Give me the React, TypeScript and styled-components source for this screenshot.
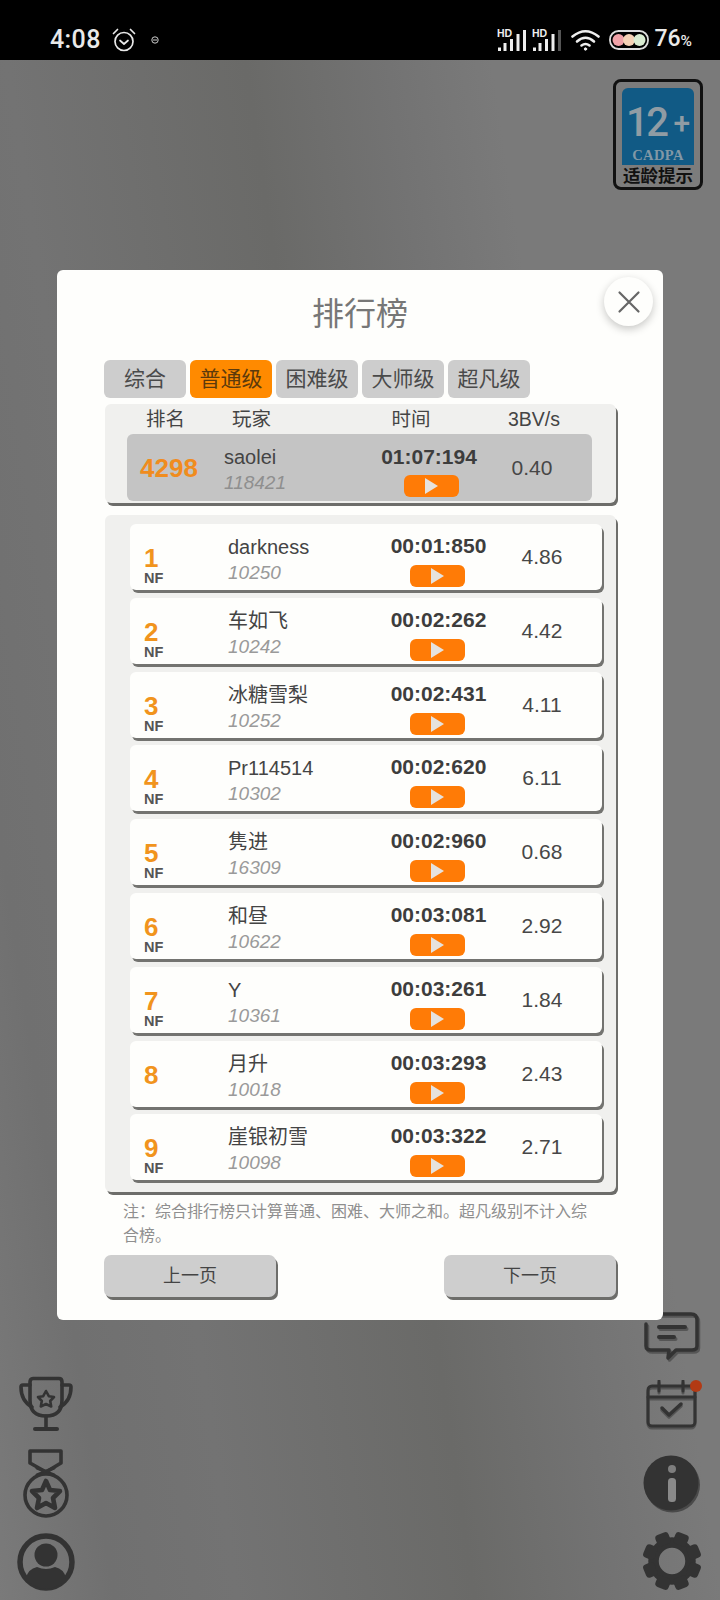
import React from "react";
import styled, { createGlobalStyle } from "styled-components";

const Global = createGlobalStyle`
  html, body { margin: 0; padding: 0; background: #000; }
  body { font-family: "Liberation Sans", "Noto Sans CJK SC", sans-serif; }
  * { box-sizing: border-box; }
`;

const Page = styled.div`
  width: 720px; height: 1600px; overflow: hidden;
  display: flex; flex-direction: column;
`;

const StatusBar = styled.div`
  height: 60px; flex: none; background: #000; color: #e9e9e9;
  display: flex; align-items: center; justify-content: space-between;
  padding: 20px 28px 0 50px;
  font-family: Roboto, "Liberation Sans", sans-serif;
`;
const StatusGroup = styled.div`display: flex; align-items: center;`;
const Clock = styled.span`font-size: 25px; font-weight: 500; letter-spacing: 0.4px; line-height: 30px; margin-right: 11px;`;
const Battery = styled.span`font-size: 23px; font-weight: 500; line-height: 26px; margin-left: 5px;`;
const Percent = styled.span`font-size: 15.5px; font-weight: 500;`;

const Screen = styled.div`
  flex: 1; display: flex; flex-direction: column; padding-top: 19px;
  background: linear-gradient(81.5deg, #7a7a7a 0%, #707070 12%, #737373 25%, #6a6a68 50%, #737373 65%, #7a7a7a 76%, #7a7a7a 100%);
`;

const BadgeRow = styled.div`display: flex; justify-content: flex-end; padding-right: 17px;`;
const AgeBadge = styled.div`
  width: 90px; height: 111px; border: 3px solid #111; border-radius: 8px; background: #7c7c7c;
  padding: 6px 6px 0; display: flex; flex-direction: column; align-items: center;
`;
const AgePanel = styled.div`
  width: 72px; height: 78px; background: #115a85; border-radius: 6px 6px 0 0;
  display: flex; flex-direction: column; align-items: center;
`;
const AgeNumber = styled.div`
  height: 57px; padding-top: 13px; display: flex; align-items: center; color: #909ca4;
  font-family: Roboto, "Liberation Sans", sans-serif;
`;
const AgeDigits = styled.span`font-size: 40px; font-weight: 500; line-height: 40px; letter-spacing: -2.5px;`;
const AgePlus = styled.span`font-size: 30px; font-weight: 500; line-height: 40px; margin-left: 7px;`;
const AgeMark = styled.div`
  font-family: "Liberation Serif", serif; font-weight: 700; font-size: 14.5px; color: #8298a6; letter-spacing: .4px; line-height: 20px;
`;
const AgeCaption = styled.div`
  font-size: 17.5px; font-weight: 700; color: #111; line-height: 23px; white-space: nowrap;
`;

const Modal = styled.div`
  position: relative; z-index: 2;
  width: 606px; height: 1050px; margin: 80px 0 0 57px;
  background: #fefefc; border-radius: 6px; padding: 24px 47px 0;
`;
const CloseButton = styled.button`
  position: absolute; top: 7px; right: 10px; width: 49px; height: 49px; border-radius: 50%;
  border: 0; padding: 0; background: #fefefc; box-shadow: 0 3px 9px rgba(0,0,0,.22);
  display: flex; align-items: center; justify-content: center;
`;
const Title = styled.h1`
  margin: 0; font-size: 32px; font-weight: 400; line-height: 40px; color: #777; text-align: center;
`;
const Tabs = styled.div`display: flex; gap: 4px; margin-top: 26px;`;
const Tab = styled.div<{ $active?: boolean }>`
  width: 82px; height: 38px; border-radius: 6px; font-size: 21px; line-height: 38px; text-align: center;
  background: ${p => (p.$active ? "#ff8a00" : "#cdcdcd")};
  color: ${p => (p.$active ? "#5c3a0c" : "#4a4a4a")};
`;

const Panel = styled.div`
  width: 511px; margin-left: 1px; background: #f0f0ee; border-radius: 6px; box-shadow: 2px 3px 0 #6d6d6a;
`;
const HeadPanel = styled(Panel)`height: 99px; margin-top: 6px;`;
const Labels = styled.div`
  height: 30px; display: grid; grid-template-columns: 86px 129px 100px 146px; padding-left: 41px;
  font-size: 19.5px; line-height: 30px; color: #444;
`;
const LabelCentered = styled.div`text-align: center;`;
const LabelStart = styled.div`text-align: left;`;

const MyRow = styled.div`
  width: 465px; height: 67px; margin-left: 22px; background: #c4c4c4; border-radius: 6px;
  display: grid; grid-template-columns: 97px 145px 120px 86px;
`;
const ListPanel = styled(Panel)`
  height: 677px; margin-top: 12px; padding: 9px 0 0 25px;
  display: flex; flex-direction: column; gap: 7.8px;
`;
const Row = styled.div`
  width: 472px; height: 66px; flex: none; background: #fefefc; border-radius: 6px; box-shadow: 2px 3px 0 #737370;
  display: grid; grid-template-columns: 98px 149px 123px 84px;
`;
const RankCell = styled.div`padding: 22px 0 0 14px;`;
const RankNumber = styled.div`
  font-size: 26px; font-weight: 700; line-height: 24px; color: #f1941d;
`;
const NF = styled.div`
  font-size: 14.5px; font-weight: 700; line-height: 14px; color: #555; margin-top: 1px;
`;
const MyRank = styled.div`
  align-self: center; padding-left: 13px; font-size: 26px; font-weight: 700; color: #f08c1e; line-height: 30px;
`;
const NameCell = styled.div`padding-top: 10px;`;
const Name = styled.div`
  font-size: 20px; line-height: 26px; color: #444; white-space: nowrap;
`;
const PlayerId = styled.div`
  font-size: 19px; font-style: italic; line-height: 26px; color: #9a9a9a;
`;
const MyPlayerId = styled(PlayerId)`color: #8f8f8f;`;
const TimeCell = styled.div<{ $mine?: boolean }>`
  padding-top: ${p => (p.$mine ? 12 : 11)}px;
  display: flex; flex-direction: column; align-items: center;
`;
const Time = styled.div`
  font-size: 21px; font-weight: 700; line-height: 22px; color: #3d3d3d; letter-spacing: 0;
`;
const PlayButton = styled.div<{ $mine?: boolean }>`
  width: 55px; height: 22px; border-radius: 6px; background: #ff7b06;
  margin: ${p => (p.$mine ? "7px 0 0 4px" : "8px 2px 0 0")};
  display: flex; align-items: center; justify-content: center;
  &::before {
    content: ""; display: block; width: 0; height: 0;
    border-style: solid; border-width: 8px 0 8px 13px;
    border-color: transparent transparent transparent #e6e2de;
  }
`;
const Value = styled.div`
  align-self: center; text-align: center; font-size: 21px; line-height: 26px; color: #474747;
`;
const Note = styled.p`
  margin: 8px 24px 0 19px; font-size: 16px; line-height: 23.5px; color: #8f8f8f;
`;
const Pager = styled.div`
  width: 512px; margin-top: 8px; display: flex; justify-content: space-between;
`;
const PageButton = styled.div`
  width: 172px; height: 42px; border-radius: 7px; background: #cecece; box-shadow: 2px 3px 0 #6d6d6a;
  font-size: 18px; line-height: 42px; text-align: center; color: #444;
`;

const Dock = styled.div`
  position: relative; z-index: 1; margin-top: -8px; padding: 0 18px 0 16px;
  display: flex; justify-content: space-between; align-items: flex-end;
`;
const DockColumn = styled.div`
  width: 60px; display: flex; flex-direction: column; align-items: center;
`;
const DockIcon = styled.svg<{ $top?: number; $left?: number }>`
  display: block; flex: none; margin-top: ${p => p.$top ?? 0}px; margin-left: ${p => p.$left ?? 0}px;
`;

const ink = "#333333";

const Signal = ({ fade }: { fade?: boolean }) => (
  <svg width="30" height="24" viewBox="0 0 30 24" style={{ marginRight: 5 }}>
    <text x="0" y="9" fontFamily="Liberation Sans" fontWeight="700" fontSize="10.5" fill="#eee">HD</text>
    <rect x="1" y="19.5" width="3" height="3.5" fill="#eee" />
    <rect x="6.5" y="15" width="3" height="8" fill="#eee" />
    <rect x="13" y="11" width="3" height="12" fill="#eee" />
    <rect x="19.5" y="6" width="3" height="17" fill="#eee" />
    <rect x="26" y="2" width="3" height="21" fill={fade ? "#555" : "#eee"} />
  </svg>
);

const CloseIcon = () => (
  <svg width="24" height="24" viewBox="0 0 24 24">
    <path d="M2.5 2.5 L21.5 21.5 M21.5 2.5 L2.5 21.5" stroke="#666" strokeWidth="2.2" strokeLinecap="round" fill="none" />
  </svg>
);

const ChatIcon = () => (
  <DockIcon width="57" height="50" viewBox="0 0 57 50">
    {[0.5, 1].map((op, i) => (
      <g key={i} opacity={op} transform={i === 0 ? "translate(1.5 2)" : ""} fill="none" stroke={ink} strokeWidth="3.5" strokeLinecap="round" strokeLinejoin="round">
        <path d="M9 2 H47 Q53 2 53 8 V34 Q53 38 48 38 H32 L24 46 L25 38 H7 Q2 38 2 34 V12" />
        <path d="M15 15 H41 M15 25 H30" strokeWidth="4" />
      </g>
    ))}
  </DockIcon>
);

const CalendarIcon = () => (
  <DockIcon $top={18} $left={4} width="56" height="50" viewBox="0 0 56 50">
    {[0.5, 1].map((op, i) => (
      <g key={i} opacity={op} transform={i === 0 ? "translate(0 2)" : ""} fill="none" stroke={ink} strokeWidth="3" strokeLinecap="round" strokeLinejoin="round">
        <rect x="2" y="6" width="47" height="40" rx="4" />
        <path d="M2 17 H49 M13 1 V11 M37 1 V11" />
        <path d="M16 28 L23 35 L35 24" strokeWidth="3.5" />
      </g>
    ))}
    <circle cx="50" cy="6" r="6" fill="#b33a14" />
  </DockIcon>
);

const InfoIcon = () => (
  <DockIcon $top={25} width="58" height="58" viewBox="0 0 58 58">
    <circle cx="29.5" cy="30" r="27.5" fill="#4a4a4a" />
    <circle cx="28" cy="28" r="27.5" fill={ink} />
    <circle cx="29" cy="14" r="4" fill="#7e7e7e" />
    <rect x="25" y="23" width="8" height="24" rx="3.5" fill="#8a8a8a" />
  </DockIcon>
);

const GearIcon = () => (
  <DockIcon $top={18} width="60" height="60" viewBox="0 0 60 60">
    <circle cx="30" cy="30" r="18.5" fill="none" stroke={ink} strokeWidth="10.5" />
    {[0, 1, 2, 3, 4, 5, 6, 7].map(k => (
      <rect key={k} x="23" y="0.5" width="14" height="12" rx="3.5" fill={ink} transform={`rotate(${22.5 + 45 * k} 30 30)`} />
    ))}
  </DockIcon>
);

const TrophyIcon = () => (
  <DockIcon width="54" height="56" viewBox="0 0 54 56">
    <g fill="none" stroke={ink} strokeWidth="3.6" strokeLinecap="round" strokeLinejoin="round">
      <path d="M14 2.5 H40 Q43 2.5 43 6 V24 Q43 40 27 40 Q11 40 11 24 V6 Q11 2.5 14 2.5 Z" />
      <path d="M11 9 H4 Q2 9 2 11 Q2 25 13 31" />
      <path d="M43 9 H50 Q52 9 52 11 Q52 25 41 31" />
      <path d="M27 40 V52" />
      <path d="M16 53 H38" strokeWidth="4" />
      <path d="M27 15 L29.8 20.2 L35 21 L31.2 25 L32.2 30.5 L27 28 L21.8 30.5 L22.8 25 L19 21 L24.2 20.2 Z" strokeWidth="2.6" />
    </g>
  </DockIcon>
);

const MedalIcon = () => (
  <DockIcon $top={17} width="46" height="69" viewBox="0 0 46 69">
    <g fill="none" stroke={ink} strokeWidth="3.6" strokeLinecap="round" strokeLinejoin="round">
      <path d="M7 2 H38 V14 L23 23 L7 14 Z" />
      <path d="M14 19 L31 26 M31 19 L14 26" strokeWidth="3" />
      <circle cx="23" cy="46" r="21" />
      <path d="M23 32 L27 41 L37 42 L30 49 L32 59 L23 54 L14 59 L16 49 L9 42 L19 41 Z" strokeWidth="4.6" />
    </g>
  </DockIcon>
);

const UserIcon = () => (
  <DockIcon $top={15} width="58" height="58" viewBox="0 0 58 58">
    <circle cx="29" cy="29" r="26" fill="none" stroke={ink} strokeWidth="5.5" />
    <circle cx="29" cy="22" r="11.5" fill={ink} />
    <path d="M9 45 Q11 36 20 34 Q29 38 38 34 Q47 36 49 45 Q40 56 29 56 Q18 56 9 45 Z" fill={ink} />
  </DockIcon>
);

const rows: [string, string, string, string, string, boolean][] = [
  ["1", "darkness", "10250", "00:01:850", "4.86", true],
  ["2", "车如飞", "10242", "00:02:262", "4.42", true],
  ["3", "冰糖雪梨", "10252", "00:02:431", "4.11", true],
  ["4", "Pr114514", "10302", "00:02:620", "6.11", true],
  ["5", "隽进", "16309", "00:02:960", "0.68", true],
  ["6", "和昼", "10622", "00:03:081", "2.92", true],
  ["7", "Y", "10361", "00:03:261", "1.84", true],
  ["8", "月升", "10018", "00:03:293", "2.43", false],
  ["9", "崖银初雪", "10098", "00:03:322", "2.71", true],
];

const tabs = ["综合", "普通级", "困难级", "大师级", "超凡级"];

export default function App() {
  return (
    <Page>
      <Global />
      <StatusBar>
        <StatusGroup>
          <Clock>4:08</Clock>
          <svg width="24" height="24" viewBox="0 0 24 24" fill="none" stroke="#e9e9e9" strokeWidth="1.7" strokeLinecap="round" strokeLinejoin="round">
            <circle cx="12" cy="13.5" r="9" />
            <path d="M8 12.5 L12 16 L16 12.5 M1.5 5.5 L5.5 1.5 M22.5 5.5 L18.5 1.5" />
          </svg>
          <svg width="8" height="8" viewBox="0 0 8 8" fill="none" stroke="#ccc" strokeWidth="1" style={{ marginLeft: 15 }}>
            <circle cx="4" cy="4" r="3.2" />
            <path d="M2 4 H6" />
          </svg>
        </StatusGroup>
        <StatusGroup>
          <Signal />
          <Signal fade />
          <svg width="29" height="22" viewBox="0 0 29 22" fill="none" stroke="#eee" strokeWidth="2.6" strokeLinecap="round" style={{ margin: "0 9px 0 4px" }}>
            <path d="M1.5 7.5 Q14.5 -3 27.5 7.5" />
            <path d="M6 12.5 Q14.5 5 23 12.5" />
            <path d="M10.5 16.5 Q14.5 13.5 18.5 16.5" />
            <circle cx="14.5" cy="20" r="1.2" fill="#eee" strokeWidth="1" />
          </svg>
          <svg width="40" height="20" viewBox="0 0 40 20">
            <rect x="1" y="1" width="38" height="18" rx="8.5" fill="none" stroke="#ddd" strokeWidth="1.8" />
            <circle cx="9.5" cy="10" r="6" fill="#f0a2a8" />
            <circle cx="20" cy="10" r="6" fill="#f5d2b6" />
            <circle cx="30.5" cy="10" r="6" fill="#d9ecd2" />
          </svg>
          <Battery>76<Percent>%</Percent></Battery>
        </StatusGroup>
      </StatusBar>
      <Screen>
        <BadgeRow>
          <AgeBadge>
            <AgePanel>
              <AgeNumber><AgeDigits>12</AgeDigits><AgePlus>+</AgePlus></AgeNumber>
              <AgeMark>CADPA</AgeMark>
            </AgePanel>
            <AgeCaption>适龄提示</AgeCaption>
          </AgeBadge>
        </BadgeRow>
        <Modal>
          <CloseButton aria-label="关闭"><CloseIcon /></CloseButton>
          <Title>排行榜</Title>
          <Tabs>
            {tabs.map((t, i) => <Tab key={t} $active={i === 1}>{t}</Tab>)}
          </Tabs>
          <HeadPanel>
            <Labels>
              <LabelStart>排名</LabelStart>
              <LabelStart>玩家</LabelStart>
              <LabelCentered>时间</LabelCentered>
              <LabelCentered>3BV/s</LabelCentered>
            </Labels>
            <MyRow>
              <MyRank>4298</MyRank>
              <NameCell>
                <Name>saolei</Name>
                <MyPlayerId>118421</MyPlayerId>
              </NameCell>
              <TimeCell $mine>
                <Time>01:07:194</Time>
                <PlayButton $mine />
              </TimeCell>
              <Value>0.40</Value>
            </MyRow>
          </HeadPanel>
          <ListPanel>
            {rows.map(([rank, name, id, time, value, nf]) => (
              <Row key={rank}>
                <RankCell>
                  <RankNumber>{rank}</RankNumber>
                  {nf && <NF>NF</NF>}
                </RankCell>
                <NameCell>
                  <Name>{name}</Name>
                  <PlayerId>{id}</PlayerId>
                </NameCell>
                <TimeCell>
                  <Time>{time}</Time>
                  <PlayButton />
                </TimeCell>
                <Value>{value}</Value>
              </Row>
            ))}
          </ListPanel>
          <Note>注：综合排行榜只计算普通、困难、大师之和。超凡级别不计入综合榜。</Note>
          <Pager>
            <PageButton>上一页</PageButton>
            <PageButton>下一页</PageButton>
          </Pager>
        </Modal>
        <Dock>
          <DockColumn>
            <TrophyIcon />
            <MedalIcon />
            <UserIcon />
          </DockColumn>
          <DockColumn>
            <ChatIcon />
            <CalendarIcon />
            <InfoIcon />
            <GearIcon />
          </DockColumn>
        </Dock>
      </Screen>
    </Page>
  );
}
